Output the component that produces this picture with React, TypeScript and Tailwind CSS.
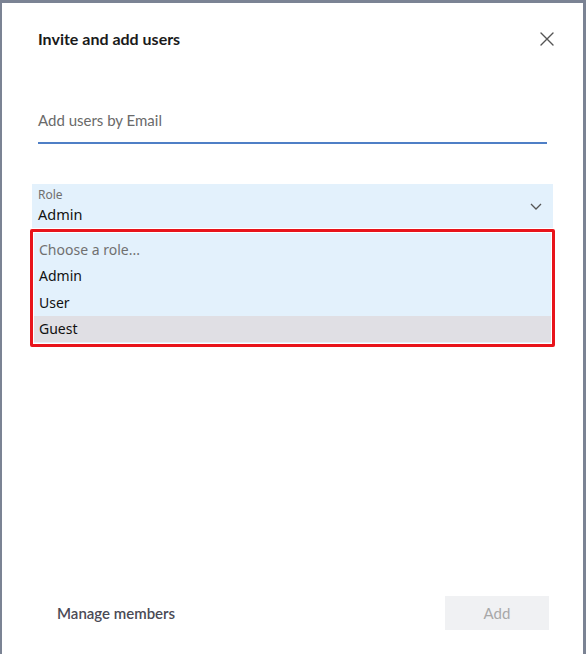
export default function App() {
  const options = [
    { label: "Choose a role...", muted: true },
    { label: "Admin" },
    { label: "User" },
    { label: "Guest", active: true },
  ];

  return (
    <div className="w-[586px] h-[654px] bg-white border-t-[3px] border-l-2 border-r-[3px] border-[#7b8394] flex flex-col font-['Lato',sans-serif]">
      <div className="flex items-center justify-between pl-[36px] pr-[28px] pt-[24px]">
        <h1 className="text-[16px] font-bold text-[#1a1a1a]">Invite and add users</h1>
        <svg width="16" height="16" viewBox="0 0 16 16" className="text-[#555]">
          <path d="M2 2 L14 14 M14 2 L2 14" stroke="currentColor" strokeWidth="1.4" strokeLinecap="round" />
        </svg>
      </div>

      <div className="mx-[36px] mt-[57px] border-b-2 border-[#4f7fc6] pb-[10px]">
        <span className="text-[15px] text-[#6a6a6a]">Add users by Email</span>
      </div>

      <div className="mx-[30px] mt-[40px] font-['Noto_Sans',sans-serif]">
        <div className="bg-[#e3f1fc] h-[44px] flex items-center justify-between pl-[6px] pr-[10px]">
          <div className="flex flex-col self-stretch pt-[4px]">
            <span className="text-[12px] leading-[14px] text-[#6f6f6f]">Role</span>
            <span className="mt-[2px] text-[14.5px] leading-[20px] text-[#111]">Admin</span>
          </div>
          <svg width="14" height="14" viewBox="0 0 14 14" className="text-[#555]">
            <path d="M2 5 L7 10 L12 5" fill="none" stroke="currentColor" strokeWidth="1.3" />
          </svg>
        </div>
        <div className="mt-px border-[3px] border-[#e8141b] rounded-[2px] p-[1px] -mx-[2px]">
          <div className="bg-[#e3f1fc] pt-[3px] pb-[1px]">
            {options.map((o) => (
              <div
                key={o.label}
                className={`h-[26.5px] flex items-center px-[5px] text-[14px] ${
                  o.active ? "bg-[#e0dfe4] text-[#111]" : o.muted ? "text-[#707070]" : "text-[#111]"
                }`}
              >
                {o.label}
              </div>
            ))}
          </div>
        </div>
      </div>

      <div className="mt-auto mb-[24px] flex items-center justify-between pl-[55px] pr-[34px]">
        <span className="text-[15px] font-semibold text-[#4a4a55]">Manage members</span>
        <button className="w-[104px] h-[34px] bg-[#f0f1f3] text-[15px] text-[#a8a8a8]">Add</button>
      </div>
    </div>
  );
}
